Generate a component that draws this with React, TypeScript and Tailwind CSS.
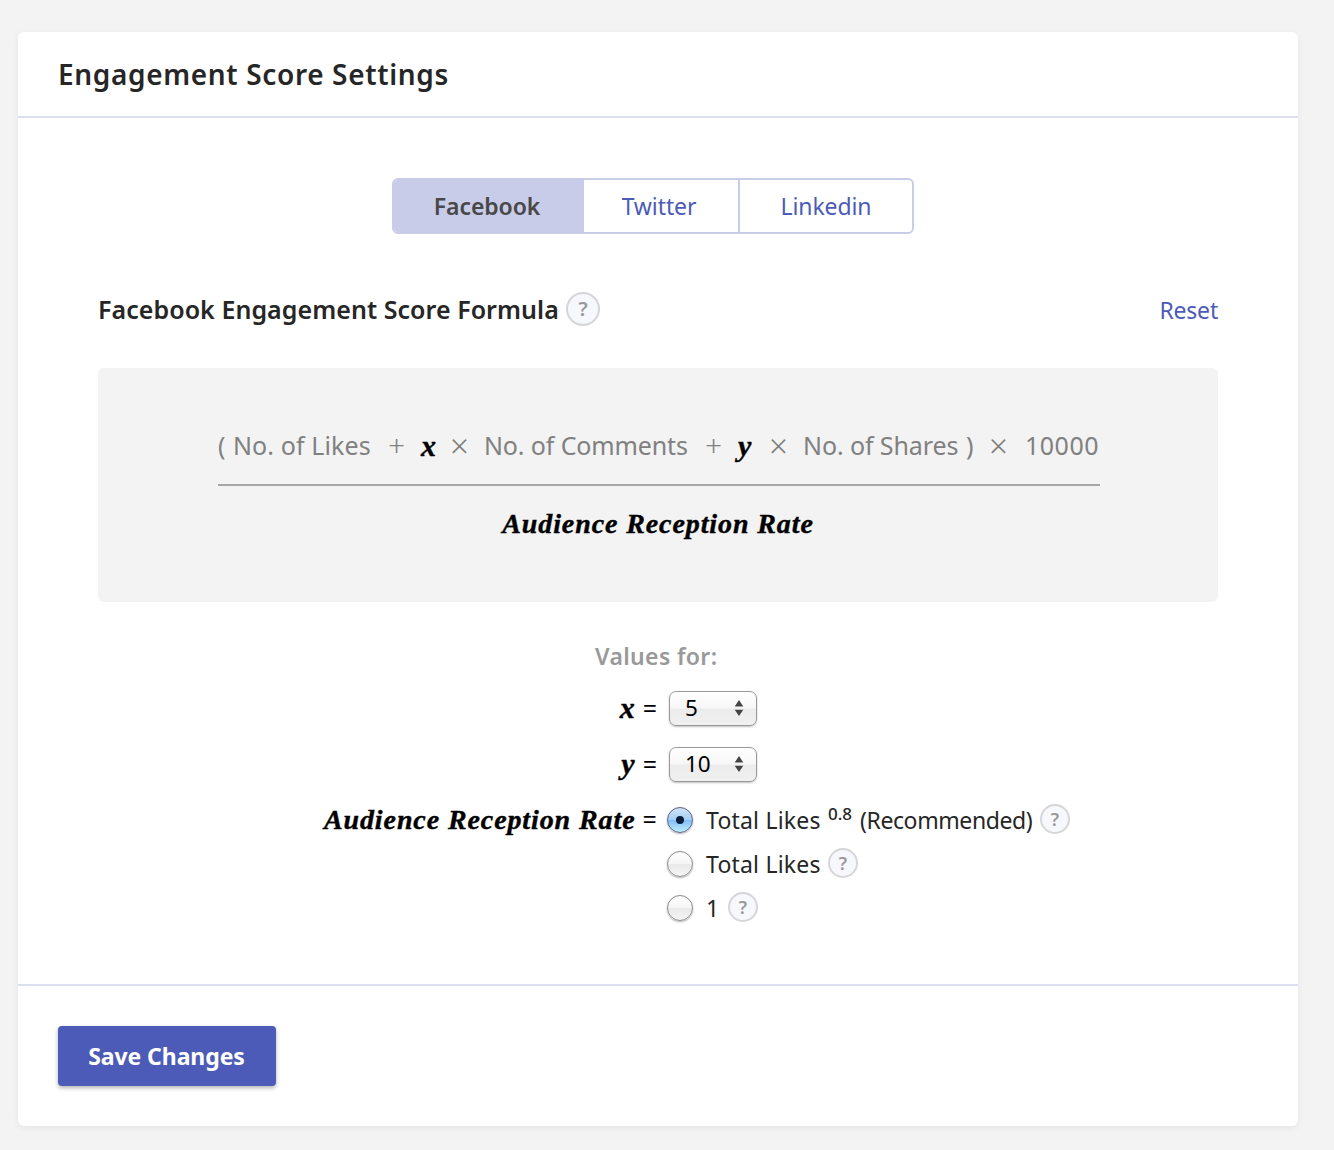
import { useState } from "react";

const serif = "font-['Liberation_Serif',serif] font-bold italic text-black [-webkit-text-stroke:0.4px_black]";

function Help({ large = false }: { large?: boolean }) {
  return (
    <button
      aria-label="Help"
      className={`flex shrink-0 items-center justify-center rounded-full border-2 border-[#d6d6d8] bg-[#f7f8fd] font-semibold leading-none text-[#999] ${
        large ? "size-[34px] text-[20px]" : "size-[30px] text-[18px]"
      }`}
    >
      ?
    </button>
  );
}

function Stepper({ value }: { value: string }) {
  return (
    <button className="flex h-[35px] w-[88px] items-center justify-between rounded-[7px] border border-[#999] bg-[linear-gradient(#fff_0%,#f7f7f7_49%,#ececec_51%,#f0f0f0_100%)] pl-[15px] pr-[12px] text-[22.5px] leading-none text-black shadow-[0_1px_2px_rgba(0,0,0,0.25)]">
      <span>{value}</span>
      <svg width="10" height="18" viewBox="0 0 10 18" fill="#444">
        <path d="M5 1L9.3 7.4H0.7Z" />
        <path d="M5 17L9.3 10.8H0.7Z" />
      </svg>
    </button>
  );
}

function Radio({ checked, onSelect }: { checked: boolean; onSelect: () => void }) {
  return (
    <button
      role="radio"
      aria-checked={checked}
      onClick={onSelect}
      className={`mt-0.5 flex size-[26px] shrink-0 items-center justify-center rounded-full border shadow-[0_1px_2px_rgba(0,0,0,0.3)] ${
        checked
          ? "border-[#5d6287] bg-[linear-gradient(#d2e5fa_0%,#a5cef6_49%,#80bdf5_51%,#c0f0ff_100%)]"
          : "border-[#8c8c8c] bg-[linear-gradient(#fff_0%,#f5f5f5_49%,#e9e9e9_51%,#f4f4f4_100%)]"
      }`}
    >
      {checked && <span className="size-2 rounded-full bg-[#071d38]" />}
    </button>
  );
}

function Variable({ name }: { name: string }) {
  return (
    <div className="flex w-[651px] items-center justify-end gap-[8px] pr-[12px] text-[23px]">
      <span className={`text-[30px] ${serif}`}>{name}</span>
      <span className="text-[25px] text-black">=</span>
    </div>
  );
}

export default function App() {
  const [rate, setRate] = useState(0);
  return (
    <div className="h-[1150px] w-[1334px] overflow-hidden whitespace-nowrap bg-[#f3f3f3] pl-[18px] pt-8 font-['Noto_Sans',sans-serif] leading-none text-[#262626]">
      <main className="flex h-[1094px] w-[1280px] flex-col rounded-md bg-white shadow-[0_2px_6px_rgba(0,0,0,0.06)]">
        <header className="flex h-[86px] items-center border-b-2 border-[#dcdff2] pl-10">
          <h1 className="text-[28px] font-semibold tracking-[0.65px]">Engagement Score Settings</h1>
        </header>

        <nav className="ml-[374px] mt-[60px] flex h-14 w-[522px] overflow-hidden rounded-md border-2 border-[#c9cce9] text-[23px] tracking-[-0.1px] text-[#4c5bb7]">
          <button className="w-[190px] bg-[#c9cce9] pr-1 font-semibold text-[#484848]">Facebook</button>
          <button className="w-[156px] border-r-2 border-[#c9cce9] pr-1">Twitter</button>
          <button className="flex-1">Linkedin</button>
        </nav>

        <div className="mx-20 mt-[58px] flex h-[34px] items-center">
          <h2 className="w-[468px] text-[25px] font-semibold tracking-[0.05px]">Facebook Engagement Score Formula</h2>
          <Help large />
          <button className="ml-auto pt-0.5 text-[23px] tracking-[-0.2px] text-[#4c5bb7]">Reset</button>
        </div>

        <section className="mx-20 mt-[42px] h-[234px] rounded-md bg-[#f3f3f3] px-[120px] pt-[59px]">
          <div className="flex h-9 w-[882px] items-center text-[25px] text-[#808080]">
            <span className="w-[15px]">(</span>
            <span className="w-[155px] tracking-[0.1px]">No. of Likes</span>
            <span className="w-[33px] text-[30px] font-light">+</span>
            <span className={`w-[29px] pt-0.5 ${serif} text-[30px]`}>x</span>
            <span className="w-[34px] text-[33px] font-light">×</span>
            <span className="w-[221px] tracking-[-0.13px]">No. of Comments</span>
            <span className="w-[33px] text-[30px] font-light">+</span>
            <span className={`w-[31px] pt-0.5 ${serif} text-[30px]`}>y</span>
            <span className="w-[34px] text-[33px] font-light">×</span>
            <span className="w-[163px] tracking-[-0.1px]">No. of Shares</span>
            <span className="w-[23px]">)</span>
            <span className="w-[36px] text-[33px] font-light">×</span>
            <span className="tracking-[0.5px]">10000</span>
          </div>
          <div className="mt-[21px] h-[2px] w-[882px] bg-[#a6a6a6]" />
          <div className={`mt-[24px] w-[880px] text-center text-[28px] tracking-[0.9px] ${serif}`}>
            Audience Reception Rate
          </div>
        </section>

        <div className="ml-[577px] mt-[43px] h-[24px] text-[23px] font-semibold tracking-[0.35px] text-[#999]">Values for:</div>
        <div className="mt-[21px] flex h-[36px] items-center">
          <Variable name="x" />
          <Stepper value="5" />
        </div>
        <div className="mt-5 flex h-[36px] items-center">
          <Variable name="y" />
          <Stepper value="10" />
        </div>
        <div className="mt-[15px] flex h-11 items-center text-[23px] tracking-[0.2px]">
          <div className="flex w-[649px] items-center justify-end gap-[7px] pr-[10px]">
            <span className={`pt-0.5 text-[28px] tracking-[0.9px] ${serif}`}>Audience Reception Rate</span>
            <span className="pt-px text-[25px] text-black">=</span>
          </div>
          <Radio checked={rate === 0} onSelect={() => setRate(0)} />
          <span className="ml-[13px] w-[122px] pt-0.5">Total Likes</span>
          <span className="w-[32px] pb-3 text-[17px] font-medium tracking-normal">0.8</span>
          <span className="w-[180px] pt-0.5 tracking-[-0.4px]">(Recommended)</span>
          <Help />
        </div>
        <div className="flex h-11 items-center pl-[649px] text-[23px] tracking-[0.2px]">
          <Radio checked={rate === 1} onSelect={() => setRate(1)} />
          <span className="ml-[13px] w-[122px] pt-0.5">Total Likes</span>
          <Help />
        </div>
        <div className="flex h-11 items-center pl-[649px] text-[23px] tracking-[0.2px]">
          <Radio checked={rate === 2} onSelect={() => setRate(2)} />
          <span className="ml-[13px] w-[22px] pt-0.5">1</span>
          <Help />
        </div>

        <footer className="mt-auto h-[142px] border-t-2 border-[#dcdff2] pl-10 pt-10">
          <button className="h-[60px] w-[218px] rounded bg-[#4c5bb7] pr-px text-[23px] font-bold tracking-[-0.08px] text-white shadow-[0_2px_4px_rgba(0,0,0,0.3)]">
            Save Changes
          </button>
        </footer>
      </main>
    </div>
  );
}
